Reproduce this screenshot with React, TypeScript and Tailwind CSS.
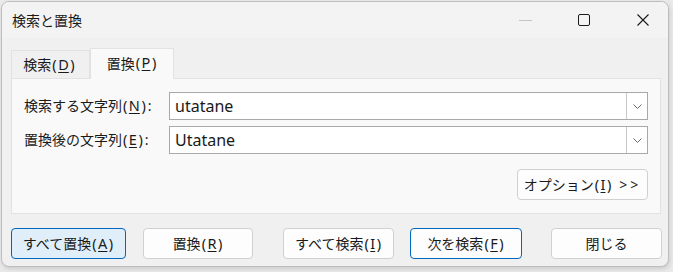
import React from "react";

const JP = { fontFamily: '"Noto Sans CJK JP", "Noto Sans", sans-serif' };
const LATIN = { fontFamily: '"Noto Sans", "Noto Sans CJK JP", sans-serif' };

// access key in parentheses, e.g. (D)
function Key({ k }: { k: string }) {
  return (
    <span className="text-[14.5px]" style={LATIN}>
      <span className="pl-[1px] pr-[1.5px]">(</span>
      <span className="underline underline-offset-[2px] decoration-1">{k}</span>
      <span className="pl-[1.5px] pr-[1px]">)</span>
    </span>
  );
}

function ComboBox({ value }: { value: string }) {
  return (
    <div className="flex h-[28px] w-[479px] border border-[#a8a8a8] bg-white">
      <div className="flex flex-1 items-center pl-[5px] text-[16px] text-[#1a1a1a]" style={LATIN}>
        {value}
      </div>
      <div className="flex w-[21px] items-center justify-center border-l border-[#c8c8c8]">
        <svg width="9" height="5" viewBox="0 0 9 5" fill="none">
          <path d="M0.5 0.5L4.5 4.5L8.5 0.5" stroke="#6b6b6b" strokeWidth="1" />
        </svg>
      </div>
    </div>
  );
}

function DialogButton({
  children,
  width,
  variant = "normal",
  className = "",
}: {
  children: React.ReactNode;
  width: string;
  variant?: "normal" | "default" | "focus";
  className?: string;
}) {
  const look =
    variant === "default"
      ? "border-[#0067c0] bg-[#e0eef9]"
      : variant === "focus"
      ? "border-[#0067c0] bg-[#fdfdfd]"
      : "border-[#d0d0d0] bg-[#fdfdfd]";
  return (
    <div
      className={`flex h-[31px] shrink-0 items-center justify-center rounded-[4px] border text-[14px] text-[#1a1a1a] ${look} ${width} ${className}`}
    >
      {children}
    </div>
  );
}

export default function App() {
  return (
    <div className="h-[272px] w-[673px] bg-[#e9e9e9] pl-px pt-px" style={JP}>
      <div className="flex h-[266px] w-[668px] flex-col overflow-hidden rounded-[8px] border border-[#bdbdbd] bg-[#f0f0f0] shadow-[1px_2px_4px_rgba(0,0,0,0.12)]">
        {/* Title bar */}
        <div className="flex h-[36px] items-center bg-[#f3f3f3] pl-[10px] pr-[19px]">
          <span className="text-[14px] text-[#1a1a1a]">検索と置換</span>
          <div className="ml-auto flex items-center">
            <div className="h-px w-[13px] bg-[#c4c4c4]" />
            <div className="ml-[46px] h-[12px] w-[12px] rounded-[2px] border border-[#1a1a1a]" />
            <svg className="ml-[47px]" width="12" height="12" viewBox="0 0 12 12" fill="none">
              <path d="M0.5 0.5L11.5 11.5M11.5 0.5L0.5 11.5" stroke="#1a1a1a" strokeWidth="1.1" />
            </svg>
          </div>
        </div>

        {/* Body */}
        <div className="pl-[9px] pt-[10px]">
          <div className="flex h-[30px] items-end">
            <div className="flex h-[28px] w-[79px] items-center justify-center border border-b-0 border-[#e2e2e2] bg-[#f0f0f0] text-[14px] text-[#1a1a1a]">
              <span className="-ml-[2px]">
                検索<Key k="D" />
              </span>
            </div>
            <div className="relative z-10 -mb-px flex h-[31px] w-[84px] items-center justify-center border border-b-0 border-[#e2e2e2] bg-[#f9f9f9] pb-[2px] text-[14px] text-[#1a1a1a]">
              置換<Key k="P" />
            </div>
          </div>

          <div className="flex h-[136px] w-[650px] flex-col border border-[#e2e2e2] bg-[#f9f9f9] pl-[12px] pr-[11px] pt-[13px]">
            <div className="flex items-center">
              <div className="w-[145px] text-[14px] text-[#1a1a1a]">
                検索する文字列<Key k="N" />
                <span className="pl-[1px]" style={LATIN}>:</span>
              </div>
              <ComboBox value="utatane" />
            </div>
            <div className="mt-[6px] flex items-center">
              <div className="w-[145px] text-[14px] text-[#1a1a1a]">
                置換後の文字列<Key k="E" />
                <span className="pl-[1px]" style={LATIN}>:</span>
              </div>
              <ComboBox value="Utatane" />
            </div>
            <div className="mt-[15px] flex justify-end pr-px">
              <DialogButton width="w-[131px]">
                オプション<Key k="I" />
                <span className="ml-[7px] tracking-[3px]" style={LATIN}>&gt;&gt;</span>
              </DialogButton>
            </div>
          </div>

          <div className="mt-[14px] flex">
            <DialogButton width="w-[115px]" variant="default">
              すべて置換<Key k="A" />
            </DialogButton>
            <DialogButton width="w-[110px]" className="ml-[17px]">
              置換<Key k="R" />
            </DialogButton>
            <DialogButton width="w-[111px]" className="ml-[30px]">
              すべて検索<Key k="I" />
            </DialogButton>
            <DialogButton width="w-[112px]" variant="focus" className="ml-[16px]">
              次を検索<Key k="F" />
            </DialogButton>
            <DialogButton width="w-[111px]" className="ml-[29px]">
              閉じる
            </DialogButton>
          </div>
        </div>
      </div>
    </div>
  );
}
